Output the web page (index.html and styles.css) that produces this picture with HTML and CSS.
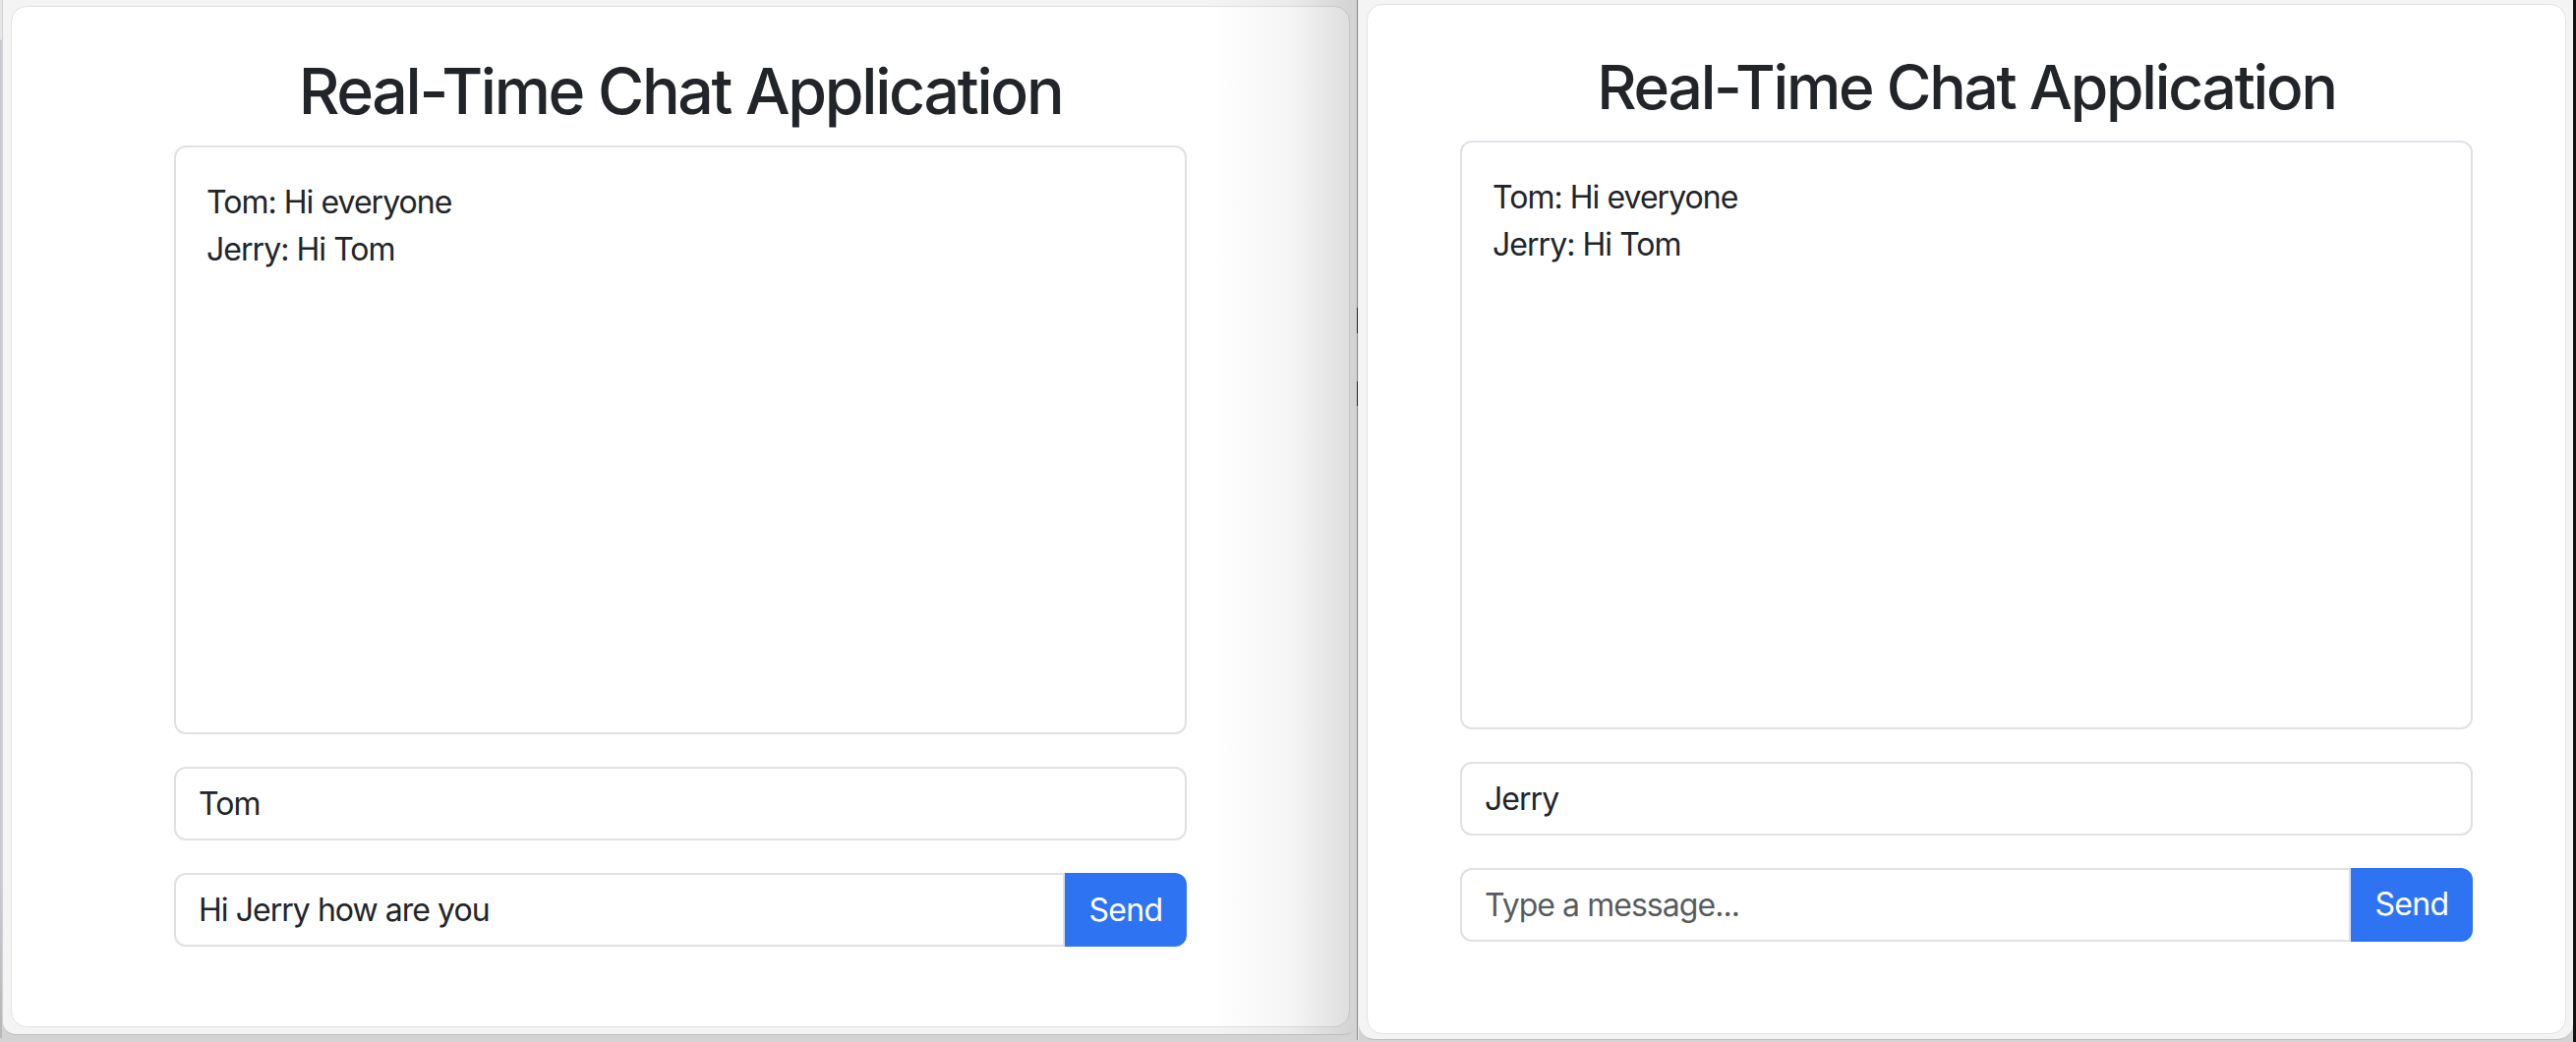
FILE: index.html
```html
<!DOCTYPE html>
<html lang="en">
<head>
<meta charset="utf-8">
<title>Real-Time Chat Application</title>
<link rel="stylesheet" href="styles.css">
</head>
<body>
<div class="desk">
  <div class="edge-left"></div>
  <section class="window win-left">
    <div class="card">
      <div class="container">
        <h1 class="title">Real-Time Chat Application</h1>
        <div class="chat">
          <div class="msg">Tom: Hi everyone</div>
          <div class="msg">Jerry: Hi Tom</div>
        </div>
        <input class="field name" type="text" value="Tom">
        <div class="group">
          <input class="field grow" type="text" value="Hi Jerry how are you" placeholder="Type a message...">
          <button class="send" type="button">Send</button>
        </div>
      </div>
    </div>
    <div class="shade"></div>
  </section>
  <div class="divider"><span class="tick t1"></span><span class="tick t2"></span></div>
  <section class="window win-right">
    <div class="card">
      <div class="container">
        <h1 class="title">Real-Time Chat Application</h1>
        <div class="chat">
          <div class="msg">Tom: Hi everyone</div>
          <div class="msg">Jerry: Hi Tom</div>
        </div>
        <input class="field name" type="text" value="Jerry">
        <div class="group">
          <input class="field grow" type="text" value="" placeholder="Type a message...">
          <button class="send" type="button">Send</button>
        </div>
      </div>
    </div>
  </section>
  <div class="edge-right"></div>
</div>
</body>
</html>
```

FILE: styles.css
```css
* { box-sizing: border-box; }
html, body { margin: 0; padding: 0; }
body {
  width: 2620px;
  height: 1060px;
  overflow: hidden;
  background: #d3d3d3;
  font-family: Inter, "Noto Sans", "Liberation Sans", sans-serif;
  color: #212529;
}
.desk {
  display: flex;
  align-items: flex-start;
  height: 1060px;
}
.edge-left {
  width: 2px;
  height: 1056px;
  background: linear-gradient(to bottom, #e6e6e6 0, #e6e6e6 40px, #c9c9d6 41px, #c9c9d6 900px, #b8b8b8 100%);
}
.window {
  position: relative;
  background: #f4f4f4;
  border-bottom: 1px solid #bdbdbd;
  border-radius: 0 0 14px 14px;
}
.win-left {
  width: 1378px;
  height: 1053px;
  padding: 6px 8px 0 8px;
  border-left: 1px solid #d0d0d0;
}
.win-right {
  width: 1235px;
  height: 1058px;
  padding: 4px 7px 0 8px;
  border-radius: 0 0 16px 16px;
}
.card {
  background: #ffffff;
  border: 1px solid #e2e2e2;
  border-radius: 16px;
  display: flex;
  justify-content: center;
}
.win-left .card { width: 1362px; height: 1039px; }
.win-right .card { width: 1220px; height: 1048px; }
.container {
  width: 1030px;
  display: flex;
  flex-direction: column;
}
.title {
  margin: 0 0 16px 0;
  font-weight: 500;
  line-height: 1.2;
  text-align: center;
  color: #212529;
  letter-spacing: -0.036em;
}
.win-left .title { font-size: 64.4px; padding-top: 48px; }
.win-right .title { font-size: 62.3px; padding-top: 47px; }
.chat {
  height: 599px;
  border: 2px solid #dee2e6;
  border-radius: 12px;
  padding: 32px 32px 32px 31px;
  margin-bottom: 33px;
}
.msg {
  font-size: 32px;
  line-height: 48px;
  letter-spacing: -0.03em;
}
.field {
  display: block;
  height: 75px;
  width: 100%;
  border: 2px solid #dee2e6;
  border-radius: 12px;
  padding: 12px 24px 12px 23px;
  font-family: inherit;
  font-size: 32px;
  line-height: 48px;
  letter-spacing: -0.03em;
  color: #212529;
  background: #fff;
  outline: none;
}
.field::placeholder { color: rgba(33, 37, 41, 0.75); }
.name { margin-bottom: 33px; }
.group {
  display: flex;
  height: 75px;
}
.grow {
  flex: 1;
  width: auto;
  border-radius: 12px 0 0 12px;
}
.send {
  width: 124px;
  height: 75px;
  border: 0;
  border-radius: 0 12px 12px 0;
  background: #2e73f2;
  color: #ffffff;
  font-family: inherit;
  font-size: 32px;
  line-height: 48px;
  letter-spacing: -0.02em;
  padding: 0;
}
.shade {
  position: absolute;
  top: 0;
  right: 0;
  bottom: 0;
  width: 150px;
  background: linear-gradient(to right, rgba(0,0,0,0) 0, rgba(0,0,0,0.04) 55%, rgba(0,0,0,0.14) 100%);
  border-radius: 0 0 14px 0;
  pointer-events: none;
}
.divider {
  width: 2px;
  height: 1058px;
  background: linear-gradient(to right, #8a8a8a 0, #8a8a8a 50%, #ececec 50%, #ececec 100%);
  display: flex;
  flex-direction: column;
}
.tick {
  display: block;
  width: 1px;
  background: #222;
}
.t1 { height: 26px; margin-top: 313px; }
.t2 { height: 25px; margin-top: 49px; }
.edge-right {
  flex: 1;
  height: 1060px;
  background: #111;
}
```
